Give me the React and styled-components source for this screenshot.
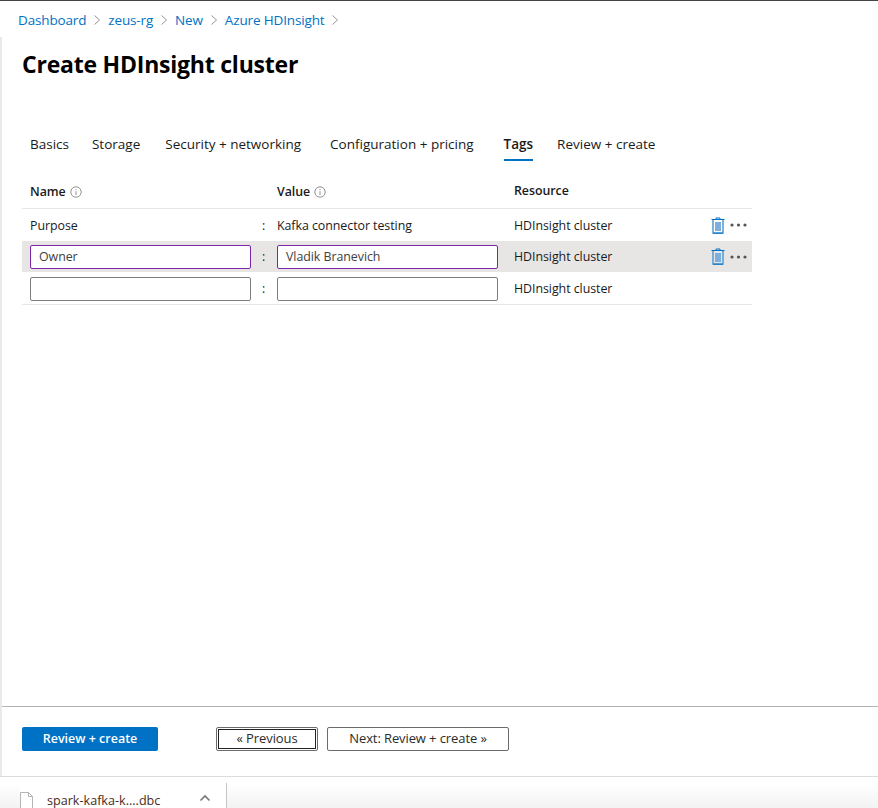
import React from 'react';
import styled, { createGlobalStyle } from 'styled-components';

const Global = createGlobalStyle`
  html, body { margin: 0; padding: 0; background: #fff; }
  body { font-family: "Open Sans", "Noto Sans", sans-serif; color: #1a1a1a; }
  * { box-sizing: border-box; }
`;

const Page = styled.div`
  height: 808px;
  overflow: hidden;
  display: flex;
  flex-direction: column;
  border-top: 1px solid #444;
`;

const Crumbs = styled.nav`
  height: 36px;
  padding: 1px 0 0 18px;
  display: flex;
  align-items: center;
  font-size: 13.5px;
  letter-spacing: -0.15px;
`;

const Crumb = styled.a`
  color: #0072c6;
`;

const Blade = styled.main`
  flex: 1;
  display: flex;
  flex-direction: column;
  border-left: 2px solid #e9e9e9;
`;

const Title = styled.h1`
  margin: 0;
  padding: 9px 0 0 20px;
  height: 80px;
  font-size: 23px;
  line-height: 36px;
  font-weight: 700;
  color: #000;
  letter-spacing: -0.22px;
`;

const Tabs = styled.div`
  display: flex;
  padding-left: 28px;
  height: 44px;
  font-size: 13.5px;
`;

const Tab = styled.div`
  margin-right: ${p => p.$gap}px;
  height: 44px;
  padding-top: 17px;
  line-height: 20px;
  font-weight: ${p => (p.$active ? 600 : 400)};
  border-bottom: 2px solid ${p => (p.$active ? '#0072c6' : 'transparent')};
`;

const Table = styled.div`
  width: 730px;
  margin: 14px 0 0 20px;
  font-size: 12.4px;
  letter-spacing: -0.05px;
`;

const Row = styled.div`
  display: grid;
  grid-template-columns: 221px 26px 221px 213px 1fr;
  padding-left: 8px;
  align-items: center;
  height: ${p => p.$h}px;
  background: ${p => (p.$hover ? '#e8e6e5' : 'transparent')};
  border-bottom: ${p => (p.$line ? '1px solid #e6e6e6' : 'none')};
`;

const Head = styled.div`
  display: flex;
  align-items: center;
  gap: 4px;
  font-weight: 600;
  color: #1a1a1a;
`;

const ResourceHead = styled(Head)`
  padding: 0 0 2px 16px;
  grid-column: 4;
`;

const Colon = styled.span`
  text-align: center;
  padding-right: 1px;
`;

const Resource = styled.span`
  padding-left: 16px;
  grid-column: 4;
`;

const Field = styled.div`
  height: 24px;
  line-height: 21px;
  padding-left: 8px;
  margin-top: ${p => (p.$dirty ? 0 : 2)}px;
  background: #fff;
  border: 1px solid ${p => (p.$dirty ? '#7a26a6' : '#7f7f7f')};
  border-radius: 2px;
  color: #404040;
`;

const Actions = styled.div`
  display: flex;
  align-items: center;
  gap: 5px;
`;

const Footer = styled.footer`
  height: 70px;
  margin-top: auto;
  padding: 20px 0 0 20px;
  display: flex;
  align-items: flex-start;
  border-top: 1px solid #b3b3b3;
`;

const Primary = styled.button`
  width: 136px;
  height: 24px;
  margin-right: 58px;
  padding: 0 0 2px;
  border: 0;
  border-radius: 2px;
  background: #0072c6;
  color: #fff;
  font: 600 12.5px "Open Sans", sans-serif;
`;

const Secondary = styled.button`
  width: ${p => p.$w}px;
  height: 24px;
  margin-right: 9px;
  padding: 0 0 2px;
  background: #fff;
  color: #2b2b2b;
  border: 1px solid #6b6b6b;
  border-radius: 2px;
  font: 400 13px "Open Sans", sans-serif;
  letter-spacing: -0.1px;
  outline: ${p => (p.$focus ? '1px solid #222' : 'none')};
  outline-offset: -3px;
`;

const Shelf = styled.div`
  height: 32px;
  display: flex;
  align-items: flex-start;
  padding-left: 20px;
  border-top: 1px solid #dcdcdc;
  background: linear-gradient(#ffffff 20%, #f3f3f3);
`;

const ShelfFile = styled.div`
  width: 207px;
  height: 31px;
  display: flex;
  align-items: flex-start;
  margin-top: 6px;
  padding-top: 9px;
  background: #fff;
  border-right: 1px solid #c4c4c4;
  font-size: 12.6px;
  color: #4a2c20;
  position: relative;
`;

const FileName = styled.span`
  margin: 1px 0 0 14px;
  line-height: 16px;
`;

const Chevron = styled.svg`
  position: absolute;
  left: 179px;
  top: 11px;
`;

const InfoIcon = () => (
  <svg width="12" height="12" viewBox="0 0 12 12" fill="none" stroke="#767676" strokeWidth="0.8">
    <circle cx="6" cy="6" r="5.2" />
    <path d="M6 5.2V9M6 3.2v1" />
  </svg>
);

const TrashIcon = () => (
  <svg width="14" height="17" viewBox="0 0 14 17" fill="none">
    <path d="M5 2.5V1h4v1.5" stroke="#0072c6" strokeWidth="1" />
    <path d="M0.5 2.5h13" stroke="#0072c6" strokeWidth="1" />
    <path d="M2 3v13h10V3" stroke="#5a9fd8" strokeWidth="1.6" />
    <path d="M2 16.2h10" stroke="#0072c6" strokeWidth="1" />
    <rect x="4" y="5" width="6" height="9" fill="#7eaedb" />
  </svg>
);

const DotsIcon = () => (
  <svg width="17" height="4" viewBox="0 0 17 4" fill="#555">
    <circle cx="2" cy="2" r="1.6" />
    <circle cx="8.5" cy="2" r="1.6" />
    <circle cx="15" cy="2" r="1.6" />
  </svg>
);

const Sep = () => (
  <svg width="22" height="12" viewBox="0 0 22 12" fill="none" stroke="#8a8a8a" strokeWidth="0.9">
    <path d="M8.5 1.5l5 4.5-5 4.5" />
  </svg>
);

const FileIcon = () => (
  <svg width="13" height="17" viewBox="0 0 13 17" fill="#fff" stroke="#b5b5b5" strokeWidth="1">
    <path d="M0.5 0.5h8l4 4v12h-12z" />
    <path d="M8.5 0.5v4h4" fill="none" />
  </svg>
);

const RowActions = () => (
  <Actions>
    <TrashIcon />
    <DotsIcon />
  </Actions>
);

const crumbs = ['Dashboard', 'zeus-rg', 'New', 'Azure HDInsight'];
const tabs = [
  ['Basics', 23],
  ['Storage', 25],
  ['Security + networking', 29],
  ['Configuration + pricing', 30],
  ['Tags', 24],
  ['Review + create', 0],
];

export default function App() {
  return (
    <Page>
      <Global />
      <Crumbs>
        {crumbs.map(c => (
          <React.Fragment key={c}>
            <Crumb>{c}</Crumb>
            <Sep />
          </React.Fragment>
        ))}
      </Crumbs>
      <Blade>
        <Title>Create HDInsight cluster</Title>
        <Tabs>
          {tabs.map(([t, gap]) => (
            <Tab key={t} $gap={gap} $active={t === 'Tags'}>{t}</Tab>
          ))}
        </Tabs>
        <Table>
          <Row $h={34} $line>
            <Head>Name <InfoIcon /></Head>
            <span />
            <Head>Value <InfoIcon /></Head>
            <ResourceHead>Resource</ResourceHead>
          </Row>
          <Row $h={32}>
            <span>Purpose</span>
            <Colon>:</Colon>
            <span>Kafka connector testing</span>
            <Resource>HDInsight cluster</Resource>
            <RowActions />
          </Row>
          <Row $h={31} $hover>
            <Field $dirty>Owner</Field>
            <Colon>:</Colon>
            <Field $dirty>Vladik Branevich</Field>
            <Resource>HDInsight cluster</Resource>
            <RowActions />
          </Row>
          <Row $h={33} $line>
            <Field />
            <Colon>:</Colon>
            <Field />
            <Resource>HDInsight cluster</Resource>
          </Row>
        </Table>
        <Footer>
          <Primary>Review + create</Primary>
          <Secondary $w={102} $focus>« Previous</Secondary>
          <Secondary $w={182}>Next: Review + create »</Secondary>
        </Footer>
      </Blade>
      <Shelf>
        <ShelfFile>
          <FileIcon />
          <FileName>spark-kafka-k....dbc</FileName>
          <Chevron width="12" height="8" viewBox="0 0 12 8" fill="none" stroke="#777" strokeWidth="1.6">
            <path d="M1.5 6.5L6 2l4.5 4.5" />
          </Chevron>
        </ShelfFile>
      </Shelf>
    </Page>
  );
}
